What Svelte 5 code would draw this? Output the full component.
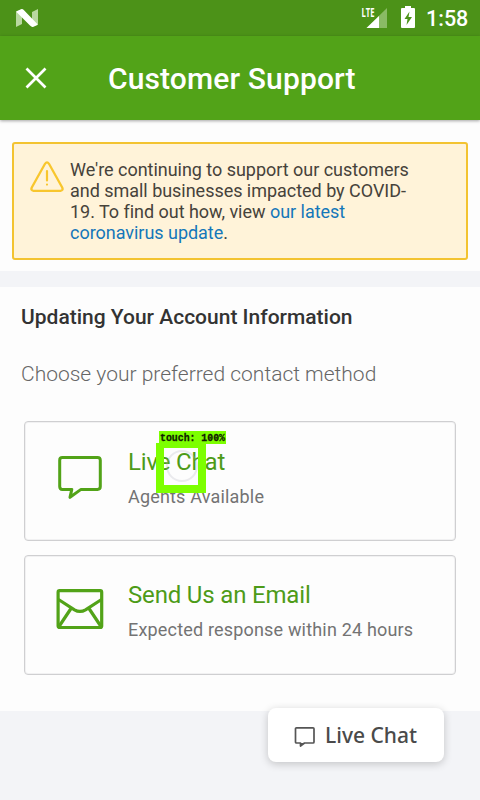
<script>
  const contacts = [
    { icon: 'chat', title: 'Live Chat', detail: 'Agents Available' },
    { icon: 'mail', title: 'Send Us an Email', detail: 'Expected response within 24 hours' }
  ];
</script>

<div class="screen">
  <div class="status">
    <svg class="logo" width="22" height="19" viewBox="0 0 22 19">
      <path d="M0 3 6 0V15L0 18ZM16 3 22 0V15L16 18Z" fill="#b9d8a0" />
      <path d="M0 2.500 4.500.4Q6.500-.5 8 1.200L22 15.800 17.500 17.800Q15.500 18.300 14 16.600Z" fill="#fff" />
    </svg>
    <svg class="signal" width="28" height="24" viewBox="0 0 28 24">
      <text x="0.500" y="10.500" textLength="13" lengthAdjust="spacingAndGlyphs">LTE</text>
      <path d="M26 2V22H5.500Z" fill="#8aba65" />
      <path d="M18 10V22H5.500Z" fill="#fff" />
    </svg>
    <svg class="battery" width="14" height="22" viewBox="0 0 14 22">
      <path d="M4 0h6v2h3q1 0 1 1v18q0 1-1 1H1q-1 0-1-1V3q0-1 1-1h3Z" fill="#fff" />
      <path d="M8.500 5.500 3.500 13h3l-1 6L11 11H7.500Z" fill="#4c9218" />
    </svg>
    <span class="clock">1:58</span>
  </div>
  <header>
    <svg width="22" height="22" viewBox="0 0 22 22"><path d="M1.500 1.500 20.500 20.500M20.500 1.500 1.500 20.500" stroke="#fff" stroke-width="2.700" /></svg>
    <h1>Customer Support</h1>
  </header>
  <section class="notice-wrap">
    <div class="notice">
      <svg width="34" height="32" viewBox="0 0 34 32" fill="none" stroke="#f8c62e" stroke-linecap="round">
        <path d="M15 2.800Q17 0 19 2.800L32.200 26.500Q33.500 29.500 30.500 29.800H3.500Q.5 29.500 1.800 26.500Z" stroke-width="2.300" />
        <path d="M17 10V19.500M17 23.500V23.600" stroke-width="2.200" />
      </svg>
      <p>We're continuing to support our customers<br />and small businesses impacted by COVID-<br />19. To find out how, view <a href="#update">our latest<br />coronavirus update</a>.</p>
    </div>
  </section>
  <main>
    <h2>Updating Your Account Information</h2>
    <p class="prompt">Choose your preferred contact method</p>
    {#each contacts as contact}
      <article class={contact.icon}>
        {#if contact.icon === 'chat'}
          <svg width="48" height="48" viewBox="0 0 48 48" fill="none" stroke="#52a318" stroke-width="3" stroke-linejoin="round">
            <path d="M5.300 3.800H40.500Q43.300 3.800 43.300 6.600V33Q43.300 35.800 40.500 35.800H24L13 43.700 14.800 35.800H5.300Q2.700 35.800 2.700 33V6.600Q2.700 3.800 5.300 3.800Z" transform="translate(1 .6)" />
          </svg>
        {:else}
          <svg width="48" height="48" viewBox="0 0 48 48" fill="none" stroke="#52a318" stroke-width="3.200">
            <rect x="2.100" y="4.700" width="43.600" height="36.800" rx="1.500" />
            <path d="M2.500 13.500 18.500 23.800Q24 27 29.500 23.800L45.500 13.500M15 22.500 3 40.500M33 22.500 45 40.500" />
          </svg>
        {/if}
        <div>
          <h3>{contact.title}</h3>
          <p>{contact.detail}</p>
        </div>
      </article>
    {/each}
  </main>
  <button>
    <svg width="22" height="22" viewBox="0 0 22 22" fill="none" stroke="#555" stroke-width="1.700" stroke-linejoin="round">
      <path d="M2.500 1.800H19Q20 1.800 20 2.800V16Q20 17 19 17H10.500L6.500 20V17H2.500Q1.500 17 1.500 16V2.800Q1.500 1.800 2.500 1.800Z" />
      <path d="M6.300 17V20.200L10.500 17Z" fill="#555" stroke="none" />
    </svg>
    <span>Live Chat</span>
  </button>
  <div class="touch-box"><i></i></div>
  <svg class="touch-label" width="67" height="13"><text x="1" y="10" textLength="65" lengthAdjust="spacingAndGlyphs">touch: 100%</text></svg>
</div>

<style>
  :global(body) { margin: 0; background: #f3f4f7; }
  * { box-sizing: border-box; }
  .screen { position: relative; width: 480px; height: 800px; overflow: hidden; font-family: Roboto, sans-serif; background: #f3f4f7; }
  h1, h2, h3, p { margin: 0; white-space: nowrap; }
  svg { flex: none; display: block; }
  .status { height: 36px; background: #4c9218; color: #fff; display: flex; padding-left: 16px; }
  .logo { margin-top: 9px; }
  .signal { margin: 6px 0 0 323px; overflow: visible; }
  .signal text { font: 700 12.500px "Open Sans", sans-serif; fill: #fff; }
  .battery { margin: 6px 0 0 12px; }
  .clock { font-size: 21.500px; line-height: 38px; margin-left: 11px; font-weight: 500; }
  header { position: relative; height: 84px; display: flex; align-items: center; padding-left: 25px; background: #52a318; box-shadow: 0 1px 3px rgba(0,0,0,.35); }
  h1 { font-size: 30px; font-weight: 500; color: #fff; margin-left: 61px; line-height: 36px; padding-top: 2px; letter-spacing: .13px; }
  .notice-wrap { height: 151px; padding: 22px 12px 0; background: #fdfdfd; }
  .notice { height: 118px; display: flex; border: 2px solid #f3c331; border-radius: 3px; background: #fff3d9; padding: 15px 0 0 16px; }
  .notice svg { margin-top: 2px; }
  .notice p { margin-left: 6px; font-size: 18px; line-height: 21px; letter-spacing: -.03px; color: #46423b; }
  a { color: #1477b9; text-decoration: none; }
  main { height: 424px; margin-top: 16px; background: #fdfdfd; padding: 18px 24px 0; }
  h2 { margin-left: -3px; font-size: 21px; line-height: 24px; font-weight: 500; color: #333; }
  .prompt { margin: 32px 0 34px -3px; font-size: 21px; line-height: 26px; font-weight: 300; color: #666; }
  article { display: flex; height: 120px; width: 432px; border: 1px solid #cfcfd1; box-shadow: inset 0 0 0 1px #f1f1f2; border-radius: 4px; padding: 30px 0 0 31px; margin-bottom: 14px; }
  .chat { padding-top: 31px; }
  article div { margin-left: 24px; margin-top: -5px; }
  h3 { font-weight: 400; font-size: 24px; line-height: 28px; letter-spacing: -.17px; color: #4d9b18; }
  article p { margin-top: 10px; font-size: 18px; line-height: 22px; letter-spacing: .18px; color: #737373; }
  button { position: absolute; left: 268px; top: 708px; width: 176px; height: 54px; border: 0; border-radius: 8px; background: #fff; box-shadow: 0 2px 8px rgba(0,0,0,.2); display: flex; align-items: center; padding: 0 0 0 26px; font: 550 21px "Noto Sans", sans-serif; color: #4a4a4a; }
  button svg { margin-top: 3px; }
  button span { margin: 0 0 0 9px; white-space: nowrap; }
  .touch-box { position: absolute; left: 156px; top: 443px; width: 50px; height: 50px; border: 8px solid #7dff00; border-top-width: 5px; }
  .touch-box i { position: absolute; left: 2px; top: 2px; width: 32px; height: 32px; border: 2px solid rgba(180,180,190,.25); border-radius: 50%; }
  .touch-label { position: absolute; left: 159px; top: 431px; background: #7dff00; overflow: visible; }
  .touch-label text { font: 700 10.500px "Liberation Mono", monospace; fill: #102000; stroke: #102000; stroke-width: .3px; }
</style>
